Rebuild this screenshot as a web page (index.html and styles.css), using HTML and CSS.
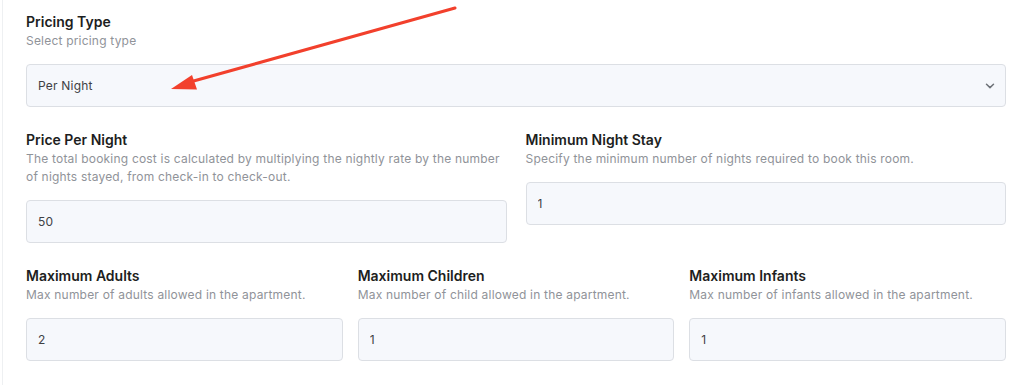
FILE: index.html
```html
<!DOCTYPE html>
<html>
<head>
<meta charset="utf-8" />
<title>Pricing</title>
<link rel="stylesheet" href="styles.css">
</head>

<body>
<div class="page">
  <div class="row">
    <div class="field">
      <div class="label">Pricing Type</div>
      <div class="desc">Select pricing type</div>
      <div class="select-box">
        <select class="input select">
          <option>Per Night</option>
          <option>Per Stay</option>
        </select>
        <svg class="chevron" width="10" height="6" viewBox="0 0 10 6"><path d="M1.5 1.2 L5 4.6 L8.5 1.2" fill="none" stroke="#6e7278" stroke-width="1.5" stroke-linecap="round" stroke-linejoin="round"/></svg>
      </div>
    </div>
  </div>
  <div class="row row-2">
    <div class="field">
      <div class="label">Price Per Night</div>
      <div class="desc">The total booking cost is calculated by multiplying the nightly rate by the number of nights stayed, from check-in to check-out.</div>
      <input type="text" class="input" value="50" />
    </div>
    <div class="field">
      <div class="label">Minimum Night Stay</div>
      <div class="desc">Specify the minimum number of nights required to book this room.</div>
      <input type="text" class="input" value="1" />
    </div>
  </div>
  <div class="row row-3">
    <div class="field">
      <div class="label">Maximum Adults</div>
      <div class="desc">Max number of adults allowed in the apartment.</div>
      <input type="text" class="input" value="2" />
    </div>
    <div class="field">
      <div class="label">Maximum Children</div>
      <div class="desc">Max number of child allowed in the apartment.</div>
      <input type="text" class="input" value="1" />
    </div>
    <div class="field">
      <div class="label">Maximum Infants</div>
      <div class="desc">Max number of infants allowed in the apartment.</div>
      <input type="text" class="input" value="1" />
    </div>
  </div>
  <!-- annotation arrow drawn over the form -->
  <svg class="arrow" width="1024" height="385" viewBox="0 0 1024 385">
    <line x1="455" y1="8" x2="190" y2="82" stroke="#f2402c" stroke-width="3" stroke-linecap="round"/>
    <polygon points="171,89 197,89.5 192,75" fill="#f2402c"/>
  </svg>
</div>
</body>
</html>
```

FILE: styles.css
```css
*{margin:0px; padding:0px; box-sizing:border-box;}
body{
	background:#fff;
	font-family:Inter, "Liberation Sans", sans-serif;
	color:#1f2023;
}
.page{
	position:relative;
	width:1024px;
	height:385px;
	padding:12px 18px 0 26px;
	border-left:1px solid #eef0f2;
	margin-left:2px;
	overflow:hidden;
}
.row{
	display:grid;
	grid-template-columns:1fr;
	width:980px;
	margin-left:-3px;
}
.row-2{
	grid-template-columns:1fr 1fr;
	column-gap:19px;
	align-items:start;
	margin-top:23px;
}
.row-3{
	grid-template-columns:1fr 1fr 1fr;
	column-gap:15px;
	margin-top:23px;
}
.label{
	font-size:14px;
	line-height:20px;
	font-weight:600;
	color:#1d1e21;
}
.desc{
	font-size:12px;
	line-height:18px;
	letter-spacing:0.2px;
	color:#909399;
	margin-bottom:14px;
}
.input{
	display:block;
	width:100%;
	height:43px;
	padding:0 11px;
	border:1px solid #dcdfe4;
	border-radius:4px;
	background:#f6f8fc;
	font-family:Inter, "Liberation Sans", sans-serif;
	font-size:12px;
	letter-spacing:0.2px;
	color:#404145;
	outline:none;
}
.select-box{
	position:relative;
}
.select{
	appearance:none;
	-webkit-appearance:none;
	cursor:pointer;
}
.chevron{
	position:absolute;
	right:11px;
	top:19px;
}
.arrow{
	position:absolute;
	left:-3px;
	top:0;
	pointer-events:none;
}
```
